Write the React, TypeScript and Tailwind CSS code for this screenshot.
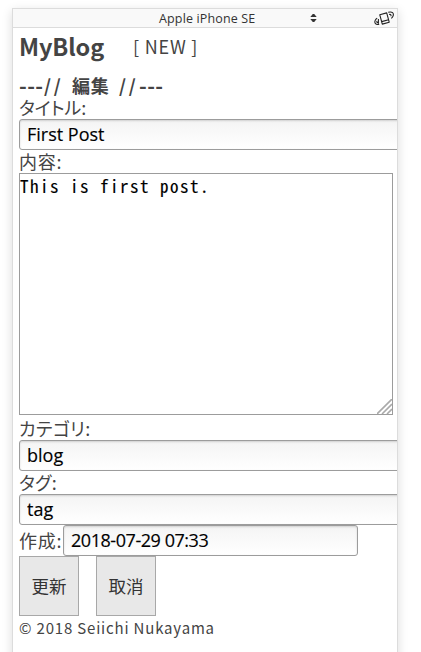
import React from "react";

const jp = "font-['Noto_Sans_CJK_JP',sans-serif]";
const field =
  "block h-[31px] shrink-0 rounded-[3px] border border-[#9c9c9c] bg-linear-to-b from-[#f4f4f4] to-white px-[7px] pb-px font-['Open_Sans',sans-serif] text-[18px] text-black [-webkit-text-stroke:0.15px_black] shadow-[inset_0_1px_2px_rgba(0,0,0,0.15)] outline-none";

function Label({ children, className = "" }: { children: React.ReactNode; className?: string }) {
  return (
    <label className={`block h-[23px] shrink-0 whitespace-nowrap text-[18px] leading-[23px] [font-feature-settings:'palt'] ${jp} ${className}`}>
      {children}
    </label>
  );
}

function DeviceBar() {
  return (
    <div className="flex h-[19px] shrink-0 items-center border-b border-[#dcdcdc] bg-[#f9f9f9] pl-[146px] pr-[3px] font-['Open_Sans',sans-serif]">
      <span className="w-[96px] whitespace-nowrap pt-px text-[12.5px] leading-[17px] tracking-[0.15px] text-[#333]">Apple iPhone SE</span>
      <svg className="ml-[55px]" width="7" height="8" viewBox="0 0 7 8" fill="#333">
        <path d="M.3 3 2.8 0h1.4l2.5 3zM.3 5 2.8 8h1.4l2.5-3z" />
      </svg>
      <svg className="ml-auto" width="20" height="16" viewBox="0 0 20 16" fill="none" stroke="#222" strokeWidth="1.1">
        <path d="m5.8 4.8 6.9-1.9 2.5 9.3-6.9 1.9zM7.7 11.6l6.9-1.9" strokeLinejoin="round" />
        <path d="M14.2 2.3c4-1.1 6 .7 4.8 3.8-.3 1-1 1.7-1.7 2.3M15.1 4.5c1.7-.5 2.4.6 1.6 1.7" />
        <path d="M5.2 14.3c-3.5.9-5.1-1.1-4-3.9.4-1 1-1.7 2-2.3M4.4 9v4.8M4.2 12.6c-1.2.3-1.7-.6-1.1-1.7" />
      </svg>
    </div>
  );
}

export default function App() {
  return (
    <div className="h-[652px] w-[421px] overflow-hidden bg-white pl-[12px] pt-[8px]">
      <div className="flex h-[660px] w-[386px] flex-col overflow-hidden border border-[#dcdcdc] bg-white shadow-[0_3px_10px_rgba(0,0,0,0.14)]">
        <DeviceBar />
        <main className="flex flex-col pl-[6px] text-[#444]">
          <header className="flex h-[46px] items-start font-['Noto_Sans_CJK_JP',sans-serif] leading-[36px]">
            <h1 className="w-[114px] whitespace-nowrap text-[23.5px] font-bold tracking-[-0.1px]">MyBlog</h1>
            <a className="whitespace-nowrap text-[18px] tracking-[0.8px]">[ NEW ]</a>
          </header>
          <h2 className={`flex h-[22px] items-center whitespace-pre text-[18px] font-bold leading-[22px] ${jp}`}>
            <span className="w-[25px] text-[21px] tracking-[0.4px]">---</span>
            <span className="w-[28px] text-[18px] tracking-[2.8px]">//</span>
            <span className="w-[47px] tracking-[0.8px]">編集</span>
            <span className="w-[20px] text-[18px] tracking-[2.8px]">//</span>
            <span className="text-[21px] tracking-[0.4px]">---</span>
          </h2>
          <Label>タイトル:</Label>
          <input className={`w-[420px] ${field}`} defaultValue="First Post" />
          <Label className="tracking-[0.7px]">内容:</Label>
          <div className="relative h-[242px] w-[374px]">
            <textarea
              className="block h-full w-full resize-none border border-[#9c9c9c] bg-white font-['Noto_Sans_Mono_CJK_JP','DejaVu_Sans_Mono',monospace] text-[17px] leading-[24px] tracking-[1.5px] text-black outline-none [-webkit-text-stroke:0.15px_black]"
              defaultValue="This is first post."
            />
            <svg className="absolute bottom-px right-px" width="15" height="15" viewBox="0 0 15 15" stroke="#aaa" strokeWidth="1.6">
              <path d="M0 15 15 0M5 15 15 5M10 15l5-5" />
            </svg>
          </div>
          <Label className="mt-[2px] tracking-[0.4px]">カテゴリ:</Label>
          <input className={`w-[420px] ${field}`} defaultValue="blog" />
          <Label className="tracking-[0.4px]">タグ:</Label>
          <input className={`w-[420px] ${field}`} defaultValue="tag" />
          <div className="flex h-[31px] items-center">
            <Label className="w-[44px] tracking-[0.7px]">作成:</Label>
            <input className={`w-[295px] tracking-[-0.45px] ${field}`} defaultValue="2018-07-29 07:33" />
          </div>
          <div className="flex h-[60px] gap-[17px]">
            <button className={`h-[60px] w-[60px] border border-[#a8a8a8] bg-[#e8e8e8] text-[17.5px] text-[#333] ${jp}`}>更新</button>
            <button className={`h-[60px] w-[60px] border border-[#a8a8a8] bg-[#e8e8e8] text-[17.5px] text-[#333] ${jp}`}>取消</button>
          </div>
          <footer className={`h-[24px] whitespace-nowrap text-[15px] leading-[24px] tracking-[0.82px] ${jp}`}>© 2018 Seiichi Nukayama</footer>
        </main>
      </div>
    </div>
  );
}
